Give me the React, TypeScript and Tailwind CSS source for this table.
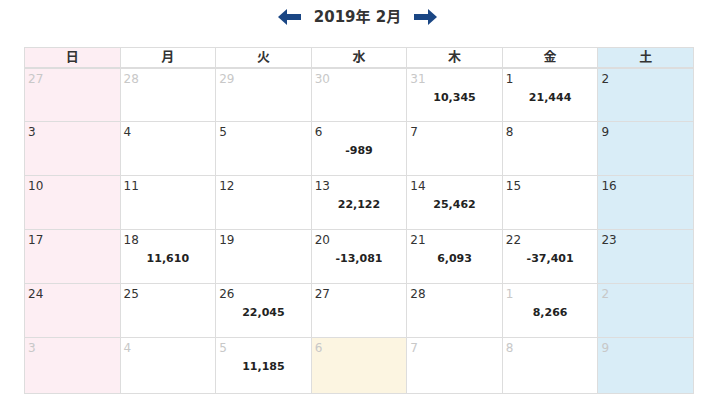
import React from 'react';

type Day = { d: number; other?: boolean; amount?: string; today?: boolean };

const weekdays = ['日', '月', '火', '水', '木', '金', '土'];

const weeks: Day[][] = [
  [
    { d: 27, other: true },
    { d: 28, other: true },
    { d: 29, other: true },
    { d: 30, other: true },
    { d: 31, other: true, amount: '10,345' },
    { d: 1, amount: '21,444' },
    { d: 2 },
  ],
  [{ d: 3 }, { d: 4 }, { d: 5 }, { d: 6, amount: '-989' }, { d: 7 }, { d: 8 }, { d: 9 }],
  [
    { d: 10 },
    { d: 11 },
    { d: 12 },
    { d: 13, amount: '22,122' },
    { d: 14, amount: '25,462' },
    { d: 15 },
    { d: 16 },
  ],
  [
    { d: 17 },
    { d: 18, amount: '11,610' },
    { d: 19 },
    { d: 20, amount: '-13,081' },
    { d: 21, amount: '6,093' },
    { d: 22, amount: '-37,401' },
    { d: 23 },
  ],
  [
    { d: 24 },
    { d: 25 },
    { d: 26, amount: '22,045' },
    { d: 27 },
    { d: 28 },
    { d: 1, other: true, amount: '8,266' },
    { d: 2, other: true },
  ],
  [
    { d: 3, other: true },
    { d: 4, other: true },
    { d: 5, other: true, amount: '11,185' },
    { d: 6, other: true, today: true },
    { d: 7, other: true },
    { d: 8, other: true },
    { d: 9, other: true },
  ],
];

const colBg = (i: number) => (i === 0 ? 'bg-[#fdeef3]' : i === 6 ? 'bg-[#d9edf7]' : 'bg-white');

const Arrow = ({ dir }: { dir: 'left' | 'right' }) => (
  <svg width="23" height="16" viewBox="0 0 23 16" className={dir === 'right' ? 'rotate-180' : ''}>
    <path d="M0 8 L9 0 L9 5 L23 5 L23 11 L9 11 L9 16 Z" fill="#1a4684" />
  </svg>
);

export default function App() {
  return (
    <div className="w-[715px] h-[420px] bg-white font-['DejaVu_Sans','Noto_Sans_CJK_JP',sans-serif] text-[#333]">
      {/* month nav */}
      <div className="h-[47px] flex items-start justify-center pt-[8px] gap-[13px]">
        <button className="mt-[1px]">
          <Arrow dir="left" />
        </button>
        <h2 className="text-[15px] font-bold leading-[18px] text-[#333]">2019年 2月</h2>
        <button className="mt-[1px]">
          <Arrow dir="right" />
        </button>
      </div>

      {/* calendar */}
      <table className="ml-[24px] w-[670px] border-collapse table-fixed">
        <thead>
          <tr>
            {weekdays.map((w, i) => (
              <th
                key={w}
                className={`${colBg(i)} h-[20px] border border-[#ddd] border-b-2 text-[13px] font-bold leading-[18px] p-0`}
              >
                {w}
              </th>
            ))}
          </tr>
        </thead>
        <tbody>
          {weeks.map((week, wi) => (
            <tr key={wi} className={wi === weeks.length - 1 ? 'h-[56px]' : 'h-[54px]'}>
              {week.map((day, di) => (
                <td
                  key={di}
                  className={`${day.today ? 'bg-[#fcf5e1]' : colBg(di)} border border-[#ddd] align-top p-0`}
                >
                  <div className={`pl-[3px] pt-[2px] text-[12px] leading-[16px] ${day.other ? 'text-[#c8c8c8]' : 'text-[#333]'}`}>
                    {day.d}
                  </div>
                  {day.amount && (
                    <div className="mt-[3px] text-center text-[11px] font-bold leading-[16px] text-[#222]">
                      {day.amount}
                    </div>
                  )}
                </td>
              ))}
            </tr>
          ))}
        </tbody>
      </table>
    </div>
  );
}
